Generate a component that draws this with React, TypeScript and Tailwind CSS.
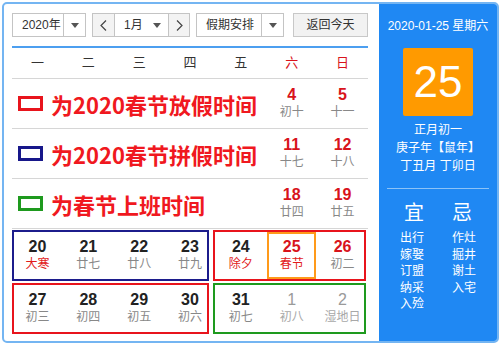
import React from "react";

type Cell = { n: string; l: string; nc?: string; lc?: string; light?: boolean };

const Caret = () => (
  <svg width="8" height="5" viewBox="0 0 8 5">
    <path d="M0 0 L8 0 L4 5 Z" fill="#555" />
  </svg>
);

const Chevron = ({ left }: { left?: boolean }) => (
  <svg width="7" height="11" viewBox="0 0 7 11">
    <path
      d={left ? "M6 0.5 L1 5.5 L6 10.5" : "M1 0.5 L6 5.5 L1 10.5"}
      fill="none"
      stroke="#444"
      strokeWidth="1.2"
    />
  </svg>
);

const Day = ({ n, l, nc = "text-[#222]", lc = "text-[#888]", light }: Cell) => (
  <div className="flex flex-col items-center justify-center">
    <span className={`text-[16px] leading-[18px] ${light ? "font-normal" : "font-bold"} ${nc}`}>{n}</span>
    <span className={`text-[12px] leading-[17px] ${lc}`}>{l}</span>
  </div>
);

const legendRows = [
  {
    box: "border-[#e8141c]",
    text: "为2020春节放假时间",
    days: [
      { n: "4", l: "初十" },
      { n: "5", l: "十一" },
    ],
  },
  {
    box: "border-[#17178a]",
    text: "为2020春节拼假时间",
    days: [
      { n: "11", l: "十七" },
      { n: "12", l: "十八" },
    ],
  },
  {
    box: "border-[#1e9a1e]",
    text: "为春节上班时间",
    days: [
      { n: "18", l: "廿四" },
      { n: "19", l: "廿五" },
    ],
  },
];

const week4: Cell[] = [
  { n: "20", l: "大寒", lc: "text-[#e21b1b]" },
  { n: "21", l: "廿七" },
  { n: "22", l: "廿八" },
  { n: "23", l: "廿九" },
  { n: "24", l: "除夕", lc: "text-[#e21b1b]" },
  { n: "25", l: "春节", nc: "text-[#d8131b]", lc: "text-[#e21b1b]" },
  { n: "26", l: "初二", nc: "text-[#d8131b]" },
];

const week5: Cell[] = [
  { n: "27", l: "初三" },
  { n: "28", l: "初四" },
  { n: "29", l: "初五" },
  { n: "30", l: "初六" },
  { n: "31", l: "初七" },
  { n: "1", l: "初八", nc: "text-[#9a9a9a]", lc: "text-[#a8a8a8]", light: true },
  { n: "2", l: "湿地日", nc: "text-[#9a9a9a]", lc: "text-[#a8a8a8]", light: true },
];

const weekdays = ["一", "二", "三", "四", "五", "六", "日"];

export default function App() {
  return (
    <div className="w-[501px] h-[345px] bg-white pl-[2px] pt-[2px] font-['Liberation_Sans','Noto_Sans_CJK_SC',sans-serif] text-[#333]">
      <div className="w-[497px] h-[341px] rounded-[5px] border-2 border-[#74b5f2] overflow-hidden flex">
        {/* left calendar */}
        <div className="w-[375px] pl-[8px] pr-[11px] pt-[9px]">
          <div className="flex h-[24px] text-[12px]">
            <div className="w-[74px] flex border border-[#c4c4c4] bg-white">
              <div className="flex-1 flex items-center pl-[9px]">2020年</div>
              <div className="w-[22px] border-l border-[#c4c4c4] flex items-center justify-center">
                <Caret />
              </div>
            </div>
            <div className="w-[98px] ml-[6px] flex border border-[#c4c4c4]">
              <div className="w-[22px] bg-[#f3f3f3] flex items-center justify-center border-r border-[#c4c4c4]">
                <Chevron left />
              </div>
              <div className="flex-1 flex items-center justify-between pl-[9px] pr-[7px]">
                <span>1月</span>
                <Caret />
              </div>
              <div className="w-[21px] bg-[#f3f3f3] flex items-center justify-center border-l border-[#c4c4c4]">
                <Chevron />
              </div>
            </div>
            <div className="w-[88px] ml-[6px] flex border border-[#c4c4c4]">
              <div className="flex-1 flex items-center pl-[9px]">假期安排</div>
              <div className="w-[22px] border-l border-[#c4c4c4] flex items-center justify-center">
                <Caret />
              </div>
            </div>
            <div className="w-[75px] ml-[9px] flex items-center justify-center border border-[#c8c8c8] bg-[#f2f2f2]">
              返回今天
            </div>
          </div>

          <div className="mt-[9px] h-[2px] bg-[#4c9ff0]" />

          <div className="grid grid-cols-7 h-[31px] items-center border-b border-[#d6d6d6] text-[13px]">
            {weekdays.map((w, i) => (
              <div key={w} className={`text-center ${i > 4 ? "text-[#d8131b]" : "text-[#333]"}`}>
                {w}
              </div>
            ))}
          </div>

          {legendRows.map((r) => (
            <div key={r.text} className="grid grid-cols-7 h-[50px] border-b border-[#d6d6d6]">
              <div className="col-span-5 flex items-center pl-[6px] gap-[8px]">
                <div className={`w-[25px] h-[15px] border-[3px] ${r.box}`} />
                <span className="text-[22px] font-bold text-[#f01820] leading-none font-['Noto_Sans_CJK_SC',sans-serif]">
                  {r.text}
                </span>
              </div>
              {r.days.map((d) => (
                <Day key={d.n} n={d.n} l={d.l} nc="text-[#d8131b]" />
              ))}
            </div>
          ))}

          <div className="relative mt-[1px] h-[51px] grid grid-cols-7">
            {week4.map((d) => (
              <Day key={d.n} {...d} />
            ))}
            <div className="absolute left-0 top-0 bottom-0 w-[197px] border-2 border-[#1c1c8c]" />
            <div className="absolute left-[201px] top-0 bottom-0 w-[153px] border-2 border-[#e8141c]" />
            <div className="absolute left-[255px] top-[2px] bottom-[2px] w-[49px] border-2 border-[#ff9a1a]" />
          </div>

          <div className="relative mt-[2px] h-[51px] grid grid-cols-7">
            {week5.map((d) => (
              <Day key={d.n} {...d} />
            ))}
            <div className="absolute left-0 top-0 bottom-0 w-[197px] border-2 border-[#e8141c]" />
            <div className="absolute left-[201px] top-0 bottom-0 w-[153px] border-2 border-[#1e9a1e]" />
          </div>
        </div>

        {/* right panel */}
        <div className="flex-1 bg-[#1f88f3] text-white flex flex-col items-center pt-[13px]">
          <div className="text-[12px] leading-[18px]">2020-01-25 星期六</div>
          <div className="mt-[13px] w-[70px] h-[68px] rounded-[2px] bg-[#ff9a00] flex items-center justify-center text-[44px] leading-none">
            25
          </div>
          <div className="mt-[5px] text-[12px] leading-[18px] text-center">
            <div>正月初一</div>
            <div>庚子年【鼠年】</div>
            <div>丁丑月 丁卯日</div>
          </div>
          <div className="mt-[13px] h-px w-[102px] bg-[#8cc3f7]" />
          <div className="mt-[12px] flex gap-[28px] text-[20px] leading-[24px]">
            <span>宜</span>
            <span>忌</span>
          </div>
          <div className="mt-[5px] flex gap-[28px] text-[12px] leading-[16.5px]">
            <div className="flex flex-col w-[24px]">
              <span>出行</span>
              <span>嫁娶</span>
              <span>订盟</span>
              <span>纳采</span>
              <span>入殓</span>
            </div>
            <div className="flex flex-col w-[24px]">
              <span>作灶</span>
              <span>掘井</span>
              <span>谢土</span>
              <span>入宅</span>
            </div>
          </div>
        </div>
      </div>
    </div>
  );
}
